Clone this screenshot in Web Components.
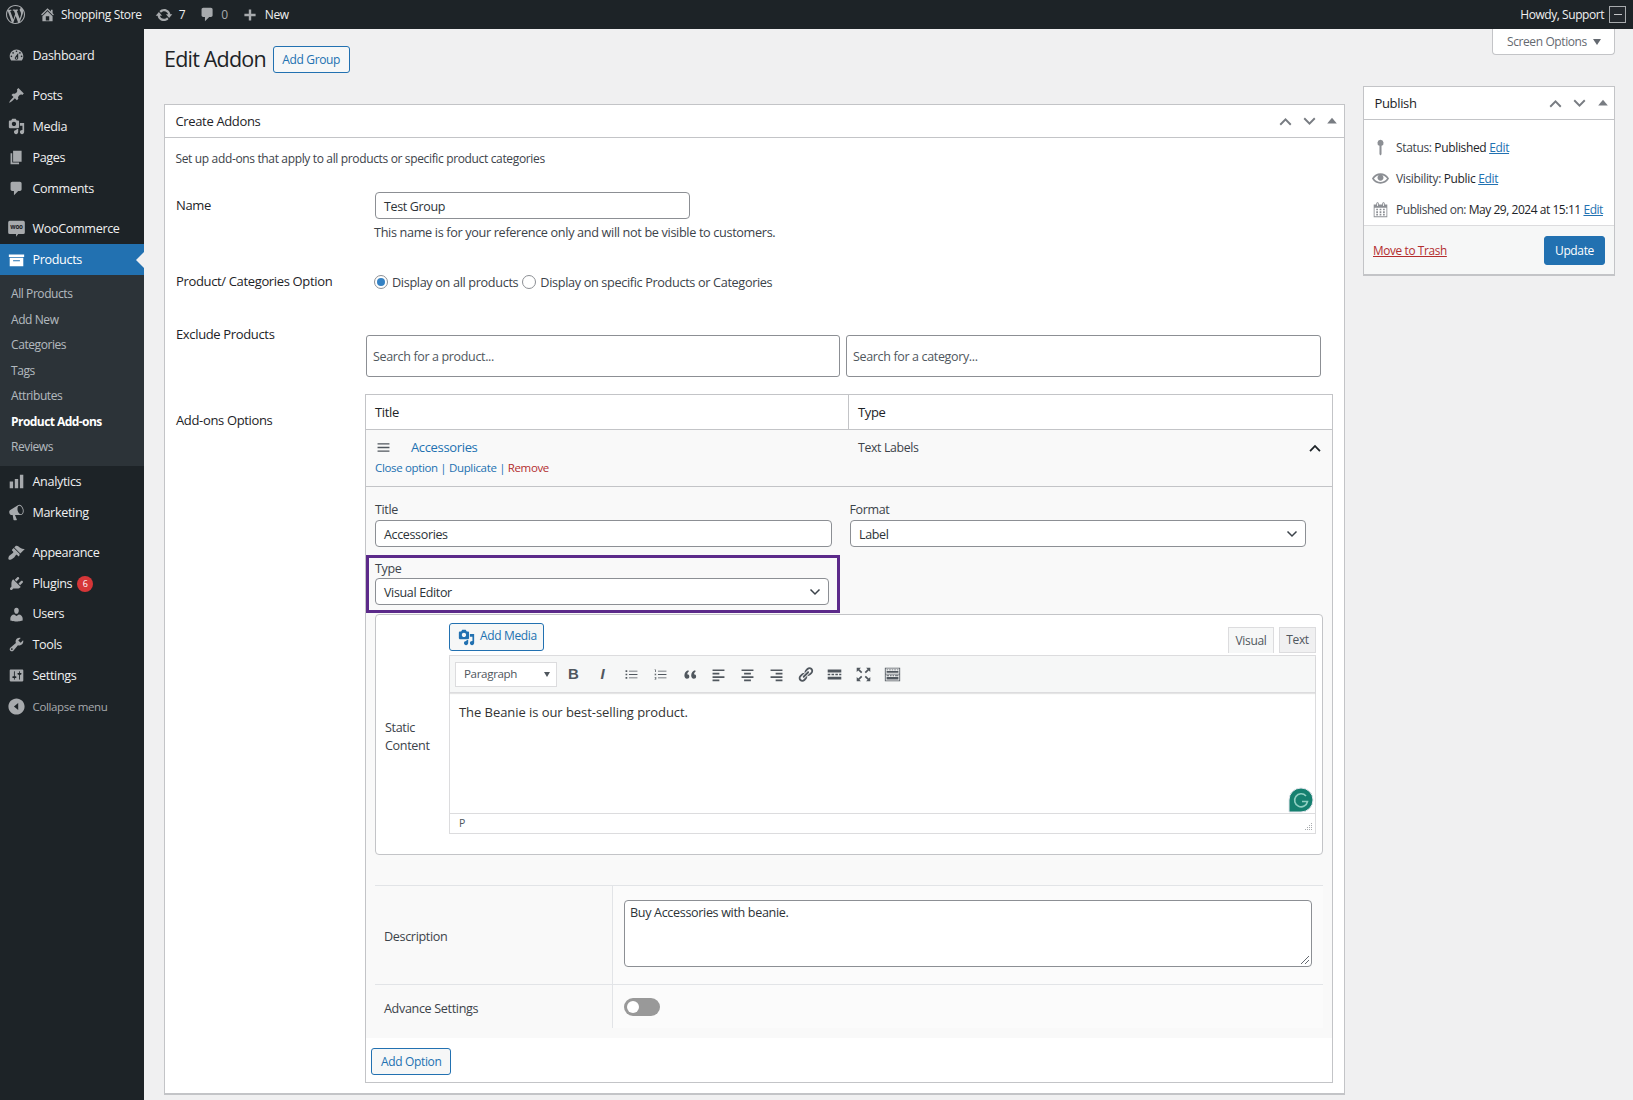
<!DOCTYPE html>
<html lang="en">
<head>
<meta charset="utf-8">
<title>Edit Addon</title>
<style>
  html, body { margin: 0; height: 1100px; overflow: hidden; }
  body {
    background: #f0f0f1;
    color: #3c434a;
    font: 13px/20px "Open Sans", "Noto Sans", sans-serif;
    letter-spacing: -0.35px;
  }
  #wrap { display: flex; height: 1071px; }
  #content { flex: 1; padding: 0 18px 0 20px; min-width: 0; }
  #top { display: flex; justify-content: space-between; align-items: flex-start; height: 57px; }
  #columns { display: flex; gap: 18px; align-items: flex-start; }
  #left { width: 1181px; margin-top: 18px; }
</style>
</head>
<body>
<wp-admin-bar></wp-admin-bar>
<div id="wrap">
  <wp-menu>
    <wp-menu-item icon="dashboard">Dashboard</wp-menu-item>
    <wp-menu-item icon="pin" sep>Posts</wp-menu-item>
    <wp-menu-item icon="media">Media</wp-menu-item>
    <wp-menu-item icon="pages">Pages</wp-menu-item>
    <wp-menu-item icon="comment">Comments</wp-menu-item>
    <wp-menu-item icon="woo" sep>WooCommerce</wp-menu-item>
    <wp-menu-item icon="archive" current>Products</wp-menu-item>
    <wp-submenu>
      <wp-submenu-item>All Products</wp-submenu-item>
      <wp-submenu-item>Add New</wp-submenu-item>
      <wp-submenu-item>Categories</wp-submenu-item>
      <wp-submenu-item>Tags</wp-submenu-item>
      <wp-submenu-item>Attributes</wp-submenu-item>
      <wp-submenu-item current>Product Add-ons</wp-submenu-item>
      <wp-submenu-item>Reviews</wp-submenu-item>
    </wp-submenu>
    <wp-menu-item icon="analytics">Analytics</wp-menu-item>
    <wp-menu-item icon="megaphone">Marketing</wp-menu-item>
    <wp-menu-item icon="brush" sep>Appearance</wp-menu-item>
    <wp-menu-item icon="plugin">Plugins<wp-badge>6</wp-badge></wp-menu-item>
    <wp-menu-item icon="users" style="height:30px">Users</wp-menu-item>
    <wp-menu-item icon="tools">Tools</wp-menu-item>
    <wp-menu-item icon="settings">Settings</wp-menu-item>
    <wp-menu-item icon="collapse" dim>Collapse menu</wp-menu-item>
  </wp-menu>
  <div id="content">
    <div id="top">
      <wp-page-title>Edit Addon</wp-page-title>
      <wp-screen-options></wp-screen-options>
    </div>
    <div id="columns">
      <div id="left">
        <wp-metabox heading="Create Addons">
          <wp-addon-form></wp-addon-form>
        </wp-metabox>
      </div>
      <wp-publish></wp-publish>
    </div>
  </div>
</div>

<script>
const ICONS = {
  wordpress: "M20 10c0-5.51-4.49-10-10-10C4.48 0 0 4.49 0 10c0 5.52 4.48 10 10 10 5.51 0 10-4.48 10-10zM7.78 15.37L4.37 6.22c.55-.02 1.17-.08 1.17-.08.5-.06.44-1.13-.06-1.11 0 0-1.45.11-2.37.11-.18 0-.37 0-.58-.01C4.12 2.69 6.87 1.11 10 1.11c2.33 0 4.45.87 6.05 2.34-.68-.11-1.65.39-1.65 1.58 0 .74.45 1.36.9 2.1.35.61.55 1.36.55 2.46 0 1.49-1.4 5-1.4 5l-3.03-8.37c.54-.02.82-.17.82-.17.5-.05.44-1.25-.06-1.22 0 0-1.44.12-2.38.12-.87 0-2.33-.12-2.33-.12-.5-.03-.56 1.2-.06 1.22l.92.08 1.26 3.41zM17.41 10c.24-.64.74-1.87.43-4.25.7 1.29 1.05 2.71 1.05 4.25 0 3.29-1.73 6.24-4.4 7.78.97-2.59 1.94-5.2 2.92-7.78zM6.1 18.09C3.12 16.65 1.11 13.53 1.11 10c0-1.3.23-2.48.72-3.59C3.25 10.3 4.67 14.2 6.1 18.09zm4.03-6.63l2.58 6.98c-.86.29-1.76.45-2.71.45-.79 0-1.57-.11-2.29-.33.81-2.38 1.62-4.74 2.42-7.1z",
  home: "M16 8.5l1.53 1.53-1.06 1.06L10 4.62l-6.47 6.47-1.06-1.06L10 2.5l4 4v-2h2v4zm-6-2.46l6 5.99V18H4v-5.97zM12 17v-5H8v5h4z",
  update: "M10.2 3.28c3.53 0 6.43 2.61 6.92 6h2.08l-3.5 4-3.5-4h2.32c-.45-1.97-2.21-3.45-4.32-3.45-1.45 0-2.73.71-3.54 1.78L4.95 5.66C6.23 4.2 8.11 3.28 10.2 3.28zm-.4 13.44c-3.52 0-6.43-2.61-6.92-6H.8l3.5-4c1.17 1.33 2.33 2.67 3.5 4H5.48c.45 1.97 2.21 3.45 4.32 3.45 1.45 0 2.73-.71 3.54-1.78l1.71 1.95c-1.28 1.46-3.15 2.38-5.25 2.38z",
  comment: "M5 2h9c1.1 0 2 .9 2 2v7c0 1.1-.9 2-2 2h-2l-5 5v-5H5c-1.1 0-2-.9-2-2V4c0-1.1.9-2 2-2z",
  plus: "M17 8.5v3h-5.5V17h-3v-5.5H3v-3h5.5V3h3v5.5z",
  dashboard: "M3.76 16h12.48c1.1-1.37 1.76-3.11 1.76-5 0-4.42-3.58-8-8-8s-8 3.58-8 8c0 1.89.66 3.63 1.76 5zM10 4c.55 0 1 .45 1 1s-.45 1-1 1-1-.45-1-1 .45-1 1-1zM6 6c.55 0 1 .45 1 1s-.45 1-1 1-1-.45-1-1 .45-1 1-1zm8 0c.55 0 1 .45 1 1s-.45 1-1 1-1-.45-1-1 .45-1 1-1zm-5.37 5.55L12 7v6c0 1.1-.9 2-2 2s-2-.9-2-2c0-.57.24-1.08.63-1.45zM4 10c.55 0 1 .45 1 1s-.45 1-1 1-1-.45-1-1 .45-1 1-1zm12 0c.55 0 1 .45 1 1s-.45 1-1 1-1-.45-1-1 .45-1 1-1zm-5 3c0-.55-.45-1-1-1s-1 .45-1 1 .45 1 1 1 1-.45 1-1z",
  pin: "M10.44 3.02l1.82-1.82 6.36 6.35-1.83 1.82c-1.05-.68-2.48-.57-3.41.36l-.75.75c-.92.93-1.04 2.35-.35 3.41l-1.83 1.82-2.41-2.41-2.8 2.79c-.42.42-3.38 2.71-3.8 2.29s1.86-3.39 2.28-3.81l2.79-2.79L4.1 9.36l1.83-1.82c1.05.69 2.48.57 3.4-.36l.75-.75c.93-.92 1.05-2.35.36-3.41z",
  media: "M13 11V4c0-.55-.45-1-1-1h-1.67L9 1H5L3.67 3H2c-.55 0-1 .45-1 1v7c0 .55.45 1 1 1h10c.55 0 1-.45 1-1zM7 4.5c1.38 0 2.5 1.12 2.5 2.5S8.38 9.5 7 9.5 4.5 8.38 4.5 7 5.62 4.5 7 4.5zM14 6h5v10.5c0 1.38-1.12 2.5-2.5 2.5S14 17.88 14 16.5s1.12-2.5 2.5-2.5c.17 0 .34.02.5.05V9h-3V6zm-4 8.05V13h2v3.5c0 1.38-1.12 2.5-2.5 2.5S7 17.88 7 16.5 8.12 14 9.5 14c.17 0 .34.02.5.05z",
  pages: "M6 15V2h10v13H6zm-1 1h8v2H3V5h2v11z",
  archive: "M19 4v3H1V4h18zM2 8h16v10H2V8zm4 3v1h8v-1H6z",
  analytics: "M18 18V2h-4v16h4zm-6 0V7H8v11h4zm-6 0v-8H2v8h4z",
  megaphone: "M18.15 5.94c.46 1.62.38 3.22-.02 4.48-.42 1.28-1.26 2.18-2.3 2.48-.16.06-.26.06-.4.06-.06.02-.12.02-.18.02-.06.02-.14.02-.22.02h-6.8l2.22 5.5c.02.14-.06.26-.14.34-.08.1-.24.16-.34.16H6.95c-.1 0-.26-.06-.34-.16-.08-.08-.16-.2-.14-.34l-1-5.5H4.25l-.02-.02c-.5.06-1.08-.18-1.54-.62s-.88-1.08-1.06-1.88c-.24-.8-.2-1.56-.02-2.2.18-.62.58-1.08 1.06-1.3l.02-.02 9-5.4c.1-.06.18-.1.24-.16.06-.04.14-.08.24-.12.16-.08.28-.12.5-.18 1.04-.3 2.24.1 3.22.98s1.74 2.2 2.26 3.86zm-2.58 5.98h-.02c.4-.1.74-.34 1.04-.7.58-.7.86-1.76.86-3.04-.02-.64-.1-1.3-.28-1.98-.34-1.36-1.02-2.5-1.78-3.24s-1.68-1.1-2.46-.88c-.38.12-.72.34-.98.7-.58.7-.84 1.76-.82 3.04.02.64.1 1.3.26 1.98.36 1.36 1.04 2.5 1.8 3.24.78.74 1.62 1.1 2.38.88z",
  brush: "M14.48 11.06L7.41 3.99l1.5-1.5c.5-.56 2.3-.47 3.51.32 1.21.8 1.43 1.28 2.91 2.1 1.18.64 2.45 1.26 4.45.85zm-.71.71L6.7 4.7 4.93 6.47c-.39.39-.39 1.02 0 1.41l1.06 1.06c.39.39.39 1.03 0 1.42-.6.6-1.43 1.11-2.21 1.69-.35.26-.7.53-1.01.84C1.43 13.23.4 15.4.4 17.17c0 .3.08.57.2.8.2.37.5.57.87.7 1.77 0 3.94-1.03 5.34-2.41.31-.31.58-.66.84-1.01.58-.78 1.09-1.61 1.69-2.21.39-.39 1.03-.39 1.42 0l1.06 1.06c.39.39 1.02.39 1.41 0z",
  plugin: "M13.11 4.36L9.87 7.6 8 5.73l3.24-3.24c.35-.34 1.05-.2 1.56.32.52.51.66 1.21.31 1.55zm-8 1.77l.91-1.12 9.01 9.01-1.19.84c-.71.71-2.63 1.16-3.82 1.16H6.14L4.9 17.26c-.59.59-1.54.59-2.12 0-.59-.58-.59-1.53 0-2.12l1.24-1.24v-3.88c0-1.13.4-3.19 1.09-3.89zm7.26 3.97l3.24-3.24c.34-.35 1.04-.21 1.55.31.52.51.66 1.21.31 1.55l-3.24 3.25z",
  users: "M10 9.25c-2.27 0-2.73-3.44-2.73-3.44C7 4.02 7.82 2 9.97 2c2.16 0 2.98 2.02 2.71 3.81 0 0-.41 3.44-2.68 3.44zm0 2.57L12.72 10c2.39 0 4.52 2.33 4.52 4.53v2.49s-3.65 1.13-7.24 1.13c-3.65 0-7.24-1.13-7.24-1.13v-2.49c0-2.25 1.94-4.48 4.47-4.48z",
  tools: "M16.68 9.77c-1.34 1.34-3.3 1.67-4.95.99l-5.41 6.52c-.99.99-2.59.99-3.58 0s-.99-2.59 0-3.57l6.52-5.42c-.68-1.65-.35-3.61.99-4.95 1.28-1.28 3.12-1.62 4.72-1.06l-2.89 2.89 2.82 2.82 2.86-2.87c.53 1.58.18 3.39-1.08 4.65zM3.81 16.21c.4.39 1.04.39 1.43 0 .4-.4.4-1.04 0-1.43-.39-.4-1.03-.4-1.43 0-.39.39-.39 1.03 0 1.43z",
  settings: "M18 16V4c0-.55-.45-1-1-1H3c-.55 0-1 .45-1 1v12c0 .55.45 1 1 1h14c.55 0 1-.45 1-1zM8 11h1c.55 0 1 .45 1 1s-.45 1-1 1H8v1.5c0 .28-.22.5-.5.5s-.5-.22-.5-.5V13H6c-.55 0-1-.45-1-1s.45-1 1-1h1V5.5c0-.28.22-.5.5-.5s.5.22.5.5V11zm5-2h-1c-.55 0-1-.45-1-1s.45-1 1-1h1V5.5c0-.28.22-.5.5-.5s.5.22.5.5V7h1c.55 0 1 .45 1 1s-.45 1-1 1h-1v5.5c0 .28-.22.5-.5.5s-.5-.22-.5-.5V9z",
  collapse: "M10 .5c5.25 0 9.5 4.25 9.5 9.5s-4.25 9.5-9.5 9.5S.5 15.25.5 10 4.75.5 10 .5zM12 14V6l-5 4z",
  eye: "M19.7 9.4C17.7 6 14 3.9 10 3.9S2.3 6 .3 9.4L0 10l.3.6c2 3.4 5.7 5.5 9.7 5.5s7.7-2.1 9.7-5.5l.3-.6-.3-.6zM10 14.1c-3.1 0-6-1.6-7.7-4.1C3.6 8 5.7 6.6 8 6.1c-.9.6-1.5 1.7-1.5 2.9 0 1.9 1.6 3.5 3.5 3.5s3.5-1.6 3.5-3.5c0-1.2-.6-2.3-1.5-2.9 2.3.5 4.4 1.9 5.7 3.9-1.7 2.5-4.6 4.1-7.7 4.1z",
  calendar: "M15 4h3v15H2V4h3V3c0-.41.15-.76.44-1.06.29-.29.65-.44 1.06-.44s.77.15 1.06.44c.29.3.44.65.44 1.06v1h4V3c0-.41.15-.76.44-1.06.29-.29.65-.44 1.06-.44s.77.15 1.06.44c.29.3.44.65.44 1.06v1zM6 3v2.5c0 .14.05.26.15.36.09.09.21.14.35.14s.26-.05.35-.14c.1-.1.15-.22.15-.36V3c0-.14-.05-.26-.15-.35-.09-.1-.21-.15-.35-.15s-.26.05-.35.15c-.1.09-.15.21-.15.35zm7 0v2.5c0 .14.05.26.14.36.1.09.22.14.36.14s.26-.05.36-.14c.09-.1.14-.22.14-.36V3c0-.14-.05-.26-.14-.35-.1-.1-.22-.15-.36-.15s-.26.05-.36.15c-.09.09-.14.21-.14.35zm4 15V8H3v10h14zM7 9v2H5V9h2zm2 0h2v2H9V9zm4 2V9h2v2h-2zm-6 1v2H5v-2h2zm2 0h2v2H9v-2zm4 2v-2h2v2h-2zm-6 1v2H5v-2h2zm4 2H9v-2h2v2zm4 0h-2v-2h2v2z",
  statuspin: "M10 1a3.6 3.6 0 0 0-1.2 7V18l1.2 1.5 1.2-1.5V8A3.6 3.6 0 0 0 10 1z",
  up: "M10 6l7 7-1.6 1.6L10 9.2l-5.4 5.4L3 13z",
  down: "M10 14L3 7l1.6-1.6L10 10.8l5.4-5.4L17 7z",
  tri: "M10 6l6 7H4z",
  burger: "M3 5h14v1.5H3zM3 9.25h14v1.5H3zM3 13.5h14v1.5H3z",
  ul: "M3 5h2v2H3zM7 5.5h10v1H7zM3 9h2v2H3zM7 9.5h10v1H7zM3 13h2v2H3zM7 13.5h10v1H7z",
  ol: "M3 4h1.5v3H3.6V4.8H3zM7 5.5h10v1H7zM3 9h2v.7H4l1 .6V11H3v-.7h1l-1-.6zM7 9.5h10v1H7zM3 13h2v3H3v-.6h1.2V15H3.4v-.6h.8v-.8H3zM7 13.5h10v1H7z",
  quote: "M8.5 5C5.5 6 4 8.5 4 11.2 4 13.4 5.2 15 7 15s2.8-1.2 2.8-2.7S8.7 9.8 7.3 9.8c.2-1.4 1-2.7 2-3.6zM16.5 5c-3 1-4.5 3.5-4.5 6.2 0 2.2 1.2 3.8 3 3.8s2.8-1.2 2.8-2.7-1.1-2.5-2.5-2.5c.2-1.4 1-2.7 2-3.6z",
  alignleft: "M3 4h14v2H3zM3 8h8v2H3zM3 12h14v2H3zM3 16h8v2H3z",
  aligncenter: "M3 4h14v2H3zM6 8h8v2H6zM3 12h14v2H3zM6 16h8v2H6z",
  alignright: "M3 4h14v2H3zM9 8h8v2H9zM3 12h14v2H3zM9 16h8v2H9z",
  link: "M17.74 2.76c1.68 1.69 1.68 4.41 0 6.1l-1.53 1.52c-1.12 1.12-2.7 1.47-4.14 1.09l2.62-2.61.76-.77.76-.76c.84-.84.84-2.2 0-3.04-.84-.85-2.2-.85-3.04 0l-.77.76-3.38 3.38c-.37-1.44-.02-3.02 1.1-4.14l1.52-1.53c1.69-1.68 4.42-1.68 6.1 0zM8.59 13.43l5.34-5.34c.42-.42.42-1.1 0-1.52-.44-.43-1.13-.39-1.53 0l-5.33 5.34c-.42.42-.42 1.1 0 1.52.44.43 1.13.39 1.52 0zm-.76 2.29l4.14-4.15c.38 1.44.03 3.02-1.09 4.14l-1.52 1.53c-1.69 1.68-4.41 1.68-6.1 0-1.68-1.68-1.68-4.42 0-6.1l1.53-1.52c1.12-1.12 2.7-1.47 4.14-1.1l-4.14 4.15c-.85.84-.85 2.2 0 3.05.84.84 2.2.84 3.04 0z",
  more: "M2 4h16v3.5H2zM2 9h3v2H2zM6.5 9h3v2h-3zM11 9h3v2h-3zM15.5 9H18v2h-2.5zM2 12.5h16V16H2z",
  fullscreen: "M2 2h5L5.2 3.8l3.4 3.4-1.4 1.4-3.4-3.4L2 7zM18 2v5l-1.8-1.8-3.4 3.4-1.4-1.4 3.4-3.4L13 2zM2 18v-5l1.8 1.8 3.4-3.4 1.4 1.4-3.4 3.4L7 18zM18 18h-5l1.8-1.8-3.4-3.4 1.4-1.4 3.4 3.4L18 13z",
  kitchen: "M1 2h18v16H1zM2 17h16V10H2zM2 9h16V3H2zM3 4h2v1H3zM6 4h2v1H6zM9 4h2v1H9zM12 4h2v1h-2zM15 4h2v1h-2zM3 6h14v2H3zM3 11h3v1H3zM7 11h2v1H7zM10 11h2v1h-2zM13 11h4v1h-4zM3 13h14v3H3z"
};

// base class: every element renders its css + html into an open shadow root
class WpElement extends HTMLElement {
  constructor() {
    super();
    this.attachShadow({ mode: "open" });
    this.shadowRoot.innerHTML = `<style>*{box-sizing:border-box} :host{box-sizing:border-box} ${this.css()}</style>${this.html()}`;
  }
  css() { return ""; }
  html() { return "<slot></slot>"; }
  attr(name, fallback = "") { return this.getAttribute(name) ?? fallback; }
}

class WpIcon extends WpElement {
  css() {
    const s = this.attr("size", "20");
    return `:host{display:inline-flex;width:${s}px;height:${s}px;flex:none}
      svg{width:100%;height:100%;display:block;fill:currentColor}
      text{font:bold 7.4px "Open Sans",sans-serif;fill:#1d2327;letter-spacing:-.2px}`;
  }
  html() {
    const name = this.attr("name");
    if (name === "woo") {
      return `<svg viewBox="0 0 20 20"><path d="M2 1h16A1.8 1.8 0 0 1 19.8 2.8v12A1.8 1.8 0 0 1 18 16.6h-6l-2.5 3v-3H2A1.8 1.8 0 0 1 .2 14.8v-12A1.8 1.8 0 0 1 2 1z"/><text x="10" y="11" text-anchor="middle">woo</text></svg>`;
    }
    return `<svg viewBox="0 0 20 20"><path d="${ICONS[name] || ""}"/></svg>`;
  }
}

class WpAdminBar extends WpElement {
  css() {
    return `:host{display:flex;align-items:center;height:29px;background:#1d2327;color:#f0f0f1;padding:0 7px 0 6px;font-size:12px}
      .i{color:#a7aaad}
      .home{margin-left:14px}
      .site{margin-left:5px}
      .up{margin-left:13px}
      .n{margin-left:6px}
      .com{margin-left:14px}
      .zero{margin-left:5px;color:#a7aaad}
      .plus{margin-left:14px}
      .new{margin-left:7px}
      .sp{flex:1}
      .howdy{letter-spacing:-.45px}
      .avatar{width:17px;height:17px;margin-left:5px;border:1px solid #a7aaad;background:#23282d;display:flex;align-items:center;justify-content:center}
      .avatar i{display:block;width:8px;height:1.5px;background:#c3c4c7}`;
  }
  html() {
    return `<wp-icon class="i" name="wordpress" size="19"></wp-icon>
      <wp-icon class="i home" name="home" size="17"></wp-icon><span class="site">Shopping Store</span>
      <wp-icon class="i up" name="update" size="18"></wp-icon><span class="n">7</span>
      <wp-icon class="i com" name="comment" size="17"></wp-icon><span class="zero">0</span>
      <wp-icon class="i plus" name="plus" size="16"></wp-icon><span class="new">New</span>
      <span class="sp"></span>
      <span class="howdy">Howdy, Support</span><span class="avatar"><i></i></span>`;
  }
}

class WpMenu extends WpElement {
  css() { return `:host{display:block;width:144px;flex:none;background:#1d2327;padding-top:11px}`; }
}

class WpMenuItem extends WpElement {
  css() {
    return `:host{display:flex;align-items:center;height:31px;padding-left:8px;color:#f0f0f1;position:relative;font-size:12.6px}
      :host([sep]){margin-top:9px}
      :host([current]){background:#2271b1;color:#fff}
      :host([current]) wp-icon{color:#fff}
      :host([current])::after{content:"";position:absolute;right:0;top:50%;margin-top:-8px;border:8px solid transparent;border-left-width:0;border-right-color:#f0f0f1}
      :host([dim]){color:#a7aaad;font-size:11.5px}
      wp-icon{color:#a7aaad;margin-right:7.5px}
      .lb{display:flex;align-items:center}`;
  }
  html() { return `<wp-icon name="${this.attr("icon")}" size="17"></wp-icon><span class="lb"><slot></slot></span>`; }
}

class WpBadge extends WpElement {
  css() {
    return `:host{display:inline-flex;align-items:center;justify-content:center;width:16px;height:16px;border-radius:50%;background:#d63638;color:#fff;font-size:9px;line-height:16px;margin-left:5px;letter-spacing:0}`;
  }
}

class WpSubmenu extends WpElement {
  css() { return `:host{display:block;background:#2c3338;padding:6.5px 0 6px}`; }
}

class WpSubmenuItem extends WpElement {
  css() {
    return `:host{display:flex;align-items:center;height:25.5px;padding-left:11px;font-size:12px;letter-spacing:-.42px;color:rgba(240,246,252,.7)}
      :host([current]){color:#fff;font-weight:700;letter-spacing:-.55px}`;
  }
}

class WpPageTitle extends WpElement {
  css() {
    return `:host{display:flex;align-items:flex-start;padding-top:17px}
      h1{margin:-1px 7px 0 0;font-size:21.5px;letter-spacing:-.8px;line-height:27px;font-weight:400;color:#1d2327}
      wp-button{font-size:12px;padding:0 8.5px}`;
  }
  html() { return `<h1><slot></slot></h1><wp-button>Add Group</wp-button>`; }
}

class WpButton extends WpElement {
  css() {
    return `:host{display:inline-flex;align-items:center;justify-content:center;height:27px;padding:0 9px;border:1px solid #2271b1;border-radius:3px;background:#f6f7f7;color:#2271b1;white-space:nowrap}
      :host([primary]){background:#2271b1;color:#fff}`;
  }
}

class WpScreenOptions extends WpElement {
  css() {
    return `:host{display:flex;align-items:center;width:123px;height:26px;padding-left:14px;background:#fff;border:1px solid #c3c4c7;border-top:0;border-radius:0 0 4px 4px;color:#646970;font-size:12px;letter-spacing:-.4px}
      i{margin-left:6px;border:4px solid transparent;border-top:6px solid #646970;border-bottom:0}`;
  }
  html() { return `Screen Options<i></i>`; }
}

class WpMetabox extends WpElement {
  css() {
    return `:host{display:block;background:#fff;border:1px solid #c3c4c7;border-bottom-width:2px}
      header{display:flex;align-items:center;height:33px;padding:0 4px 0 10.5px;border-bottom:1px solid #c3c4c7;color:#1d2327}
      .t{flex:1}
      wp-icon{color:#787c82;margin-left:7px}
      wp-icon.tri{margin-left:6px}`;
  }
  html() {
    return `<header><span class="t">${this.attr("heading")}</span>
      <wp-icon name="up" size="17"></wp-icon><wp-icon name="down" size="17"></wp-icon><wp-icon class="tri" name="tri" size="16"></wp-icon></header><slot></slot>`;
  }
}

class WpInput extends WpElement {
  css() {
    return `:host{display:flex;align-items:center;height:27px;padding:2px 8px 0;background:#fff;border:1px solid #8c8f94;border-radius:4px;color:#2c3338;font-size:12.5px}
      :host([tall]){height:42px;padding:1px 6px 0;color:#50575e;border-radius:3px}`;
  }
}

class WpSelect extends WpElement {
  css() {
    return `:host{display:flex;align-items:center;justify-content:space-between;height:27px;padding:2px 7px 0 8px;background:#fff;border:1px solid #8c8f94;border-radius:4px;color:#2c3338;font-size:12.5px}
      svg{width:12px;height:8px;fill:none;stroke:#3c434a;stroke-width:1.5;margin-top:-2px}`;
  }
  html() { return `<span><slot></slot></span><svg viewBox="0 0 12 8"><path d="M1.5 1.5L6 6l4.5-4.5"/></svg>`; }
}

class WpRadio extends WpElement {
  css() {
    return `:host{display:inline-flex;align-items:center;font-size:12.7px}
      i{width:14px;height:14px;border:1px solid #8c8f94;border-radius:50%;background:#fff;margin-right:4px;display:flex;align-items:center;justify-content:center}
      :host([checked]) i::before{content:"";width:8px;height:8px;border-radius:50%;background:#3582c4}`;
  }
  html() { return `<i></i><slot></slot>`; }
}

class WpFormRow extends WpElement {
  css() {
    return `:host{display:flex;align-items:flex-start}
      .l{flex:none;width:var(--label,199px);color:#1d2327;padding-top:var(--label-top,0)}
      .c{flex:1;min-width:0}`;
  }
  html() { return `<div class="l">${this.attr("label")}</div><div class="c"><slot></slot></div>`; }
}

class WpAddonForm extends WpElement {
  css() {
    return `:host{display:block;padding:11px 11px 10px}
      .intro{margin-bottom:23px;font-size:12px;margin-left:-.5px}
      .name wp-form-row{--label-top:3px}
      wp-input.n{width:315px}
      .desc{margin:3px 0 0 -1px;font-size:12.7px}
      .cat{margin-top:29px}
      .rad{display:flex;gap:4px;padding-top:1px;margin-left:-1px}
      .ex{margin-top:32px;--label:190px}
      .ex .pair{display:grid;grid-template-columns:474px 475px;gap:6px;padding-top:11px}
      .ad{margin-top:17px;--label:189px;--label-top:16px}`;
  }
  html() {
    return `<div class="intro">Set up add-ons that apply to all products or specific product categories</div>
      <div class="name"><wp-form-row label="Name"><wp-input class="n">Test Group</wp-input><div class="desc">This name is for your reference only and will not be visible to customers.</div></wp-form-row></div>
      <wp-form-row class="cat" label="Product/ Categories Option"><div class="rad"><wp-radio checked>Display on all products</wp-radio><wp-radio>Display on specific Products or Categories</wp-radio></div></wp-form-row>
      <wp-form-row class="ex" label="Exclude Products"><div class="pair"><wp-input tall>Search for a product...</wp-input><wp-input tall>Search for a category...</wp-input></div></wp-form-row>
      <wp-form-row class="ad" label="Add-ons Options"><wp-addon-table></wp-addon-table></wp-form-row>`;
  }
}

class WpAddonTable extends WpElement {
  css() {
    return `:host{display:block;border:1px solid #c3c4c7;background:#fff;color:#3c434a}
      .cols{display:grid;grid-template-columns:482px 1fr}
      .th{height:35px;border-bottom:1px solid #c3c4c7;color:#1d2327;align-items:center}
      .th div{line-height:34px;height:34px;padding-left:9px}
      .th div+div{border-left:1px solid #c3c4c7}
      .opt{background:#f9f9f9}
      .head{height:57px;border-bottom:1px solid #c3c4c7;padding-top:7px}
      .head .a{padding-left:9px}
      .row{display:flex;align-items:center;height:20px}
      .row wp-icon{color:#50575e;margin:0 19px 0 0}
      .row a{color:#2271b1}
      .links{margin-top:1px;color:#2271b1;font-size:11.5px}
      .links b{color:#b32d2e;font-weight:400}
      .tl{display:flex;justify-content:space-between;align-items:center;height:20px;margin-top:1px;padding:0 9px 0 10px;font-size:12.3px}
      .tl wp-icon{color:#1d2327}
      .body{padding-top:13px}
      .two{display:grid;grid-template-columns:457px 456px;gap:0 18px;padding-left:9px;font-size:12.5px}
      .two div{color:#3c434a}
      .two div+div{margin-left:-.5px}
      .hl{width:474px;height:58px;margin-top:8px;border:3px solid #5c2a8a;padding:1px 0 0 6px;font-size:12.5px;line-height:19px}
      .hl wp-select{width:454px;line-height:20px}
      wp-visual-editor{margin:1px 0 0 9px;width:948px}
      wp-option-extras{margin:30px 0 0 9px;width:948px}
      .pad{height:10px}
      .foot{height:44px;padding:10px 0 0 5px;background:#fff}
      .foot wp-button{font-size:12px}`;
  }
  html() {
    return `<div class="cols th"><div>Title</div><div>Type</div></div>
      <div class="opt">
        <div class="cols head">
          <div class="a"><div class="row"><wp-icon name="burger" size="17"></wp-icon><a>Accessories</a></div>
            <div class="links">Close option | Duplicate | <b>Remove</b></div></div>
          <div class="tl">Text Labels<wp-icon name="up" size="16"></wp-icon></div>
        </div>
        <div class="body">
          <div class="two"><div>Title</div><div>Format</div>
            <wp-input>Accessories</wp-input><wp-select>Label</wp-select></div>
          <div class="hl">Type<wp-select>Visual Editor</wp-select></div>
          <wp-visual-editor></wp-visual-editor>
          <wp-option-extras></wp-option-extras>
          <div class="pad"></div>
        </div>
      </div>
      <div class="foot"><wp-button>Add Option</wp-button></div>`;
  }
}

class WpVisualEditor extends WpElement {
  css() {
    return `:host{display:grid;grid-template-columns:73px 867px;height:241px;background:#fff;border:1px solid #c3c4c7;border-radius:4px}
      .lb{align-self:center;padding:4px 0 0 9px;line-height:18px;font-size:12.6px}
      .ed{padding-top:8px}
      .top{display:flex;justify-content:space-between;align-items:flex-start;height:32px}
      wp-button{height:28px;padding:0 6px 2px 8px;font-size:12px}
      wp-button wp-icon{margin:2px 5px 0 0}
      .tabs{display:flex;gap:5px;margin-top:4px;font-size:12px;color:#50575e}
      .tabs span{display:flex;align-items:center;justify-content:center;height:26px;border:1px solid #dcdcde;background:#f0f0f1;width:37px}
      .tabs span:first-child{background:#f6f7f7;width:46px;border-bottom:0}
      .frame{border:1px solid #dcdcde}
      .bar{display:flex;align-items:center;height:37px;padding-left:5px;background:#f6f7f7;border-bottom:1px solid #dcdcde;box-shadow:0 1px 1px rgba(0,0,0,.1);color:#50575e;position:relative}
      .fmt{display:flex;align-items:center;justify-content:space-between;width:102px;height:25px;padding:0 6px 0 8px;background:#fff;border:1px solid #dcdcde;margin-right:2px;font-size:11.6px;color:#50575e}
      .fmt i{border:3.5px solid transparent;border-top:5px solid #50575e;border-bottom:0}
      .bar .b{width:29px;display:flex;justify-content:center;align-items:center;font-size:15px;line-height:20px}
      .bar .b.tx{font-family:"Liberation Sans",sans-serif;font-weight:700;letter-spacing:0}
      .txt{height:120px;padding:9px 9px;color:#333;position:relative;letter-spacing:-.06px}
      .gr{position:absolute;right:1px;bottom:0;width:26px;height:26px}
      .st{height:20px;border-top:1px solid #dcdcde;padding:0 9px;line-height:19px;font-size:10.5px;color:#50575e;position:relative}
      .grip{position:absolute;right:2px;bottom:2px;width:9px;height:9px}`;
  }
  html() {
    const tools = ["ul", "ol", "quote", "alignleft", "aligncenter", "alignright", "link", "more", "fullscreen", "kitchen"]
      .map(n => `<span class="b"><wp-icon name="${n}" size="17"></wp-icon></span>`).join("");
    return `<div class="lb">Static Content</div>
      <div class="ed">
        <div class="top"><wp-button><wp-icon name="media" size="17"></wp-icon>Add Media</wp-button>
          <div class="tabs"><span>Visual</span><span>Text</span></div></div>
        <div class="frame">
          <div class="bar"><span class="fmt">Paragraph<i></i></span><span class="b tx">B</span><span class="b tx"><i>I</i></span>${tools}</div>
          <div class="txt">The Beanie is our best-selling product.
            <svg class="gr" viewBox="0 0 26 26"><path d="M1 25V13a12 12 0 1 1 12 12z" fill="#15806f" stroke="#e3e5ec"/><path d="M18 9a6.5 6.5 0 1 0 1.5 5.5H14" fill="none" stroke="#8fcfc2" stroke-width="1.6"/></svg>
          </div>
          <div class="st">P<svg class="grip" viewBox="0 0 9 9" fill="#a7aaad"><path d="M7 1h1v1H7zM5 3h1v1H5zM7 3h1v1H7zM3 5h1v1H3zM5 5h1v1H5zM7 5h1v1H7zM1 7h1v1H1zM3 7h1v1H3zM5 7h1v1H5zM7 7h1v1H7z"/></svg></div>
        </div>
      </div>`;
  }
}

class WpOptionExtras extends WpElement {
  css() {
    return `:host{display:grid;grid-template-columns:238px 1fr;border-top:1px solid #e2e4e7;font-size:12.6px}
      .l{padding:4px 0 0 9px;display:flex;align-items:center;border-right:1px solid #e2e4e7}
      .r{background:#fbfbfb}
      .r1{height:98px;padding:14px 11px 0 11px}
      .b{border-top:1px solid #e2e4e7}
      .r2{height:44px;padding:13px 0 0 11px}
      .ta{height:67px;background:#fff;border:1px solid #8c8f94;border-radius:4px;padding:2px 5px;color:#2c3338;position:relative}
      .ta svg{position:absolute;right:1px;bottom:1px;width:10px;height:10px}
      .tg{width:36px;height:18px;border-radius:9px;background:#999;padding:3px}
      .tg i{display:block;width:12px;height:12px;border-radius:50%;background:#fff}`;
  }
  html() {
    return `<div class="l">Description</div>
      <div class="r r1"><div class="ta">Buy Accessories with beanie.<svg viewBox="0 0 10 10" stroke="#646970" fill="none"><path d="M1 9l8-8M5 9l4-4"/></svg></div></div>
      <div class="l b" style="padding-top:5px">Advance Settings</div>
      <div class="r r2 b"><div class="tg"><i></i></div></div>`;
  }
}

class WpPublish extends WpElement {
  css() {
    return `:host{display:block;width:252px;flex:none;background:#fff;border:1px solid #c3c4c7;border-bottom-width:2px}
      header{display:flex;align-items:center;height:33px;padding:0 3px 0 10.5px;border-bottom:1px solid #c3c4c7;color:#1d2327}
      .t{flex:1}
      header wp-icon{color:#787c82;margin-left:7px}
      .m{padding:12px 0 0 11px;height:105px;font-size:12px}
      .m div{display:flex;align-items:center;height:31px}
      .m wp-icon{color:#8c8f94;margin:0 7px 0 -3px}
      .m span{white-space:pre}
      .m .tight{letter-spacing:-.46px}
      .m b{font-weight:400;color:#1d2327}
      .m a{color:#2271b1;text-decoration:underline}
      .f{display:flex;justify-content:space-between;align-items:center;height:49px;background:#f6f7f7;border-top:1px solid #dcdcde;padding:0 9px;font-size:11.8px}
      .f a{color:#b32d2e;text-decoration:underline}
      wp-button{height:29px;padding:1px 10px 0;font-size:12px}`;
  }
  html() {
    return `<header><span class="t">Publish</span><wp-icon name="up" size="17"></wp-icon><wp-icon name="down" size="17"></wp-icon><wp-icon name="tri" size="16"></wp-icon></header>
      <div class="m">
        <div><wp-icon name="statuspin" size="17"></wp-icon><span>Status: <b>Published</b> <a>Edit</a></span></div>
        <div><wp-icon name="eye" size="17"></wp-icon><span>Visibility: <b>Public</b> <a>Edit</a></span></div>
        <div><wp-icon name="calendar" size="17"></wp-icon><span class="tight">Published on: <b>May 29, 2024 at 15:11</b> <a>Edit</a></span></div>
      </div>
      <div class="f"><a>Move to Trash</a><wp-button primary>Update</wp-button></div>`;
  }
}

const elements = {
  "wp-icon": WpIcon, "wp-admin-bar": WpAdminBar, "wp-menu": WpMenu, "wp-menu-item": WpMenuItem,
  "wp-badge": WpBadge, "wp-submenu": WpSubmenu, "wp-submenu-item": WpSubmenuItem,
  "wp-page-title": WpPageTitle, "wp-button": WpButton, "wp-screen-options": WpScreenOptions,
  "wp-metabox": WpMetabox, "wp-input": WpInput, "wp-select": WpSelect, "wp-radio": WpRadio,
  "wp-form-row": WpFormRow, "wp-addon-form": WpAddonForm, "wp-addon-table": WpAddonTable,
  "wp-visual-editor": WpVisualEditor, "wp-option-extras": WpOptionExtras, "wp-publish": WpPublish
};
for (const [tag, cls] of Object.entries(elements)) customElements.define(tag, cls);
</script>
</body>
</html>
